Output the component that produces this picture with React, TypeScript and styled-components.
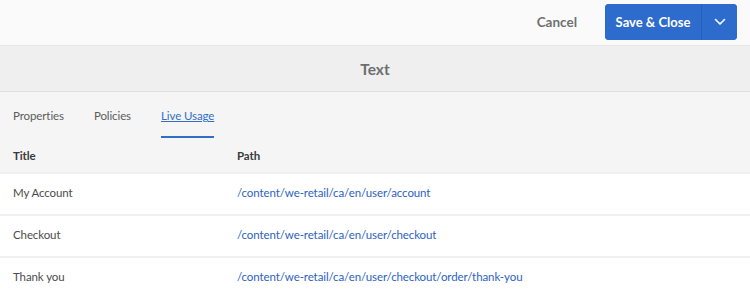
import React from "react";
import styled, { createGlobalStyle } from "styled-components";

const Global = createGlobalStyle`
  html, body { margin: 0; padding: 0; background: #f5f5f5; }
  body { font-family: Lato, "Open Sans", "Liberation Sans", sans-serif; -webkit-font-smoothing: antialiased; }
  * { box-sizing: border-box; }
`;

const Page = styled.div`
  width: 750px;
  height: 298px;
  display: flex;
  flex-direction: column;
  background: #f5f5f5;
  overflow: hidden;
`;

const TopBar = styled.div`
  height: 46px;
  background: #fafafa;
  border-bottom: 1px solid #e6e6e6;
  display: flex;
  align-items: center;
  justify-content: flex-end;
  padding-right: 13px;
  gap: 28px;
`;

const CancelButton = styled.button`
  background: none;
  border: none;
  font-family: inherit;
  font-size: 13.5px;
  font-weight: 700;
  color: #707070;
  padding: 0;
  cursor: pointer;
`;

const SplitButton = styled.div`
  display: flex;
  height: 36px;
  border-radius: 4px;
  overflow: hidden;
  background: #2d6ccd;
`;

const PrimaryPart = styled.button`
  border: none;
  background: #2d6ccd;
  color: #fff;
  font-family: inherit;
  font-size: 13px;
  font-weight: 700;
  white-space: nowrap;
  padding: 0;
  width: 97px;
  border-right: 1px solid #2460bb;
`;

const CaretPart = styled.button`
  border: none;
  background: #2d6ccd;
  color: #fff;
  width: 35px;
  display: flex;
  align-items: center;
  justify-content: center;
  padding: 0;
`;

const TitleBar = styled.div`
  height: 47px;
  background: #efefef;
  border-bottom: 1px solid #e0e0e0;
  display: flex;
  align-items: center;
  justify-content: center;
  font-size: 15.5px;
  font-weight: 700;
  color: #6e6e6e;
`;

const Tabs = styled.div`
  display: flex;
  height: 46px;
  padding-left: 13px;
  gap: 30px;
`;

const Tab = styled.div<{ $active?: boolean }>`
  position: relative;
  display: flex;
  align-items: center;
  padding-top: 1px;
  font-size: 11.5px;
  letter-spacing: -0.1px;
  color: ${(p) => (p.$active ? "#326ec8" : "#5c5c5c")};
  text-decoration: ${(p) => (p.$active ? "underline" : "none")};
  ${(p) =>
    p.$active &&
    `&::after {
      content: "";
      position: absolute;
      left: 0; right: 0; bottom: 0;
      height: 2px;
      background: #326ec8;
    }`}
`;

const Grid = styled.div`
  display: flex;
  flex-direction: column;
  gap: 2px;
  background: #f0f0f0;
`;

const Row = styled.div<{ $head?: boolean }>`
  display: grid;
  grid-template-columns: 224px 1fr;
  padding-left: 13px;
  padding-bottom: ${(p) => (p.$head ? "0" : "3px")};
  align-items: center;
  height: ${(p) => (p.$head ? "34px" : "40px")};
  background: ${(p) => (p.$head ? "#f5f5f5" : "#ffffff")};
  font-size: 11.5px;
  letter-spacing: -0.1px;
  font-weight: ${(p) => (p.$head ? 700 : 400)};
  color: ${(p) => (p.$head ? "#3a3a3a" : "#4b4b4b")};
`;

const PathLink = styled.a`
  color: #2d5fc4;
  text-decoration: none;
`;

const rows = [
  { title: "My Account", path: "/content/we-retail/ca/en/user/account" },
  { title: "Checkout", path: "/content/we-retail/ca/en/user/checkout" },
  { title: "Thank you", path: "/content/we-retail/ca/en/user/checkout/order/thank-you" },
];

export default function App() {
  return (
    <Page>
      <Global />
      <TopBar>
        <CancelButton>Cancel</CancelButton>
        <SplitButton>
          <PrimaryPart>Save &amp; Close</PrimaryPart>
          <CaretPart>
            <svg width="12" height="8" viewBox="0 0 12 8" fill="none">
              <path d="M1.5 1.5 L6 6 L10.5 1.5" stroke="#fff" strokeWidth="1.6" strokeLinecap="round" strokeLinejoin="round" />
            </svg>
          </CaretPart>
        </SplitButton>
      </TopBar>
      <TitleBar>Text</TitleBar>
      <Tabs>
        <Tab>Properties</Tab>
        <Tab>Policies</Tab>
        <Tab $active>Live Usage</Tab>
      </Tabs>
      <Grid>
        <Row $head>
          <span>Title</span>
          <span>Path</span>
        </Row>
        {rows.map((r) => (
          <Row key={r.path}>
            <span>{r.title}</span>
            <PathLink>{r.path}</PathLink>
          </Row>
        ))}
      </Grid>
    </Page>
  );
}
